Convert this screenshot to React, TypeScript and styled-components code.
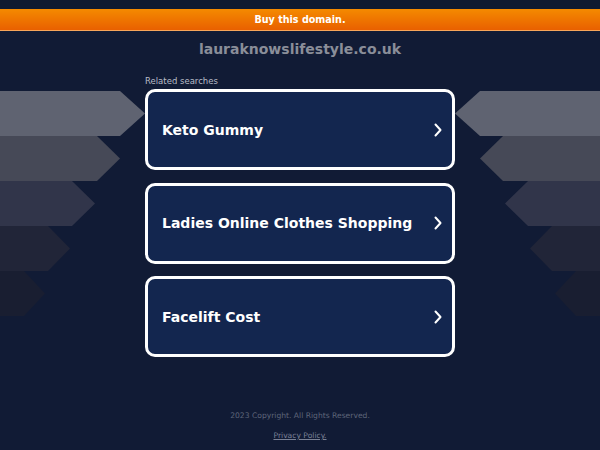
import styled, { createGlobalStyle } from "styled-components";

const GlobalStyle = createGlobalStyle`
  html, body {
    margin: 0;
    padding: 0;
    background: #111b35;
    font-family: "DejaVu Sans", Verdana, sans-serif;
  }
`;

const searches = ["Keto Gummy", "Ladies Online Clothes Shopping", "Facelift Cost"];

const stripes = [
  { body: 120, tip: 145, color: "#5f6371" },
  { body: 97, tip: 120, color: "#464957" },
  { body: 72, tip: 95, color: "#31354a" },
  { body: 48, tip: 70, color: "#212538" },
  { body: 24, tip: 45, color: "#191e31" },
];

const Arrows = ({ flip }: { flip?: boolean }) => (
  <svg
    width="145"
    height="230"
    viewBox="0 0 145 230"
    style={flip ? { transform: "scaleX(-1)" } : undefined}
  >
    {stripes.map((s, i) => {
      const y = i * 45;
      return (
        <polygon
          key={i}
          points={`0,${y} ${s.body},${y} ${s.tip},${y + 22.5} ${s.body},${y + 45} 0,${y + 45}`}
          fill={s.color}
        />
      );
    })}
  </svg>
);

const Chevron = () => (
  <svg width="10" height="14" viewBox="0 0 10 14">
    <polyline
      points="2.5,1.5 7.5,7 2.5,12.5"
      fill="none"
      stroke="#ffffff"
      strokeWidth="2"
      strokeLinecap="round"
      strokeLinejoin="round"
    />
  </svg>
);

export default function App() {
  return (
    <Page>
      <GlobalStyle />
      <TopStrip />
      <BuyBar>Buy this domain.</BuyBar>
      <Domain>lauraknowslifestyle.co.uk</Domain>
      <Main>
        <Side />
        <Label>Related searches</Label>
        <Side />
        <Side>
          <Arrows />
        </Side>
        <Cards>
          {searches.map((s) => (
            <Card key={s}>
              <span>{s}</span>
              <Chevron />
            </Card>
          ))}
        </Cards>
        <Side>
          <Arrows flip />
        </Side>
      </Main>
      <Footer>
        <Copy>2023 Copyright. All Rights Reserved.</Copy>
        <Policy>Privacy Policy.</Policy>
      </Footer>
    </Page>
  );
}

const Page = styled.div`
  width: 600px;
  height: 450px;
  overflow: hidden;
  background: #111b35;
`;

const TopStrip = styled.div`
  height: 9px;
  background: #0f1a30;
`;

const BuyBar = styled.div`
  height: 21px;
  line-height: 21px;
  text-align: center;
  color: #ffffff;
  font-size: 9.6px;
  font-weight: bold;
  background: linear-gradient(#f48a00, #e96000);
  border-bottom: 1px solid #f7a55a;
`;

const Domain = styled.h1`
  margin: 0;
  padding-top: 9px;
  height: 29px;
  line-height: 18px;
  text-align: center;
  font-size: 14px;
  font-weight: bold;
  color: #8a8e99;
`;

const Main = styled.div`
  display: grid;
  grid-template-columns: 145px 310px 145px;
`;

const Side = styled.div`
  padding-top: 2px;
  line-height: 0;
`;

const Label = styled.div`
  height: 13px;
  padding-top: 7px;
  font-size: 8.5px;
  line-height: 11px;
  color: #b8bcc6;
`;

const Cards = styled.div`
  display: flex;
  flex-direction: column;
  gap: 12.5px;
`;

const Card = styled.div`
  box-sizing: border-box;
  height: 81px;
  display: flex;
  align-items: center;
  justify-content: space-between;
  padding: 0 9px 0 14px;
  border: 3px solid #ffffff;
  border-radius: 10px;
  background: #13264f;
  color: #ffffff;
  font-size: 14px;
  font-weight: bold;
`;

const Footer = styled.div`
  padding-top: 54px;
  text-align: center;
  font-size: 7.6px;
  line-height: 10px;
`;

const Copy = styled.div`
  color: #5e6579;
  height: 20px;
`;

const Policy = styled.a`
  display: inline-block;
  color: #7a8195;
  text-decoration: underline;
`;
